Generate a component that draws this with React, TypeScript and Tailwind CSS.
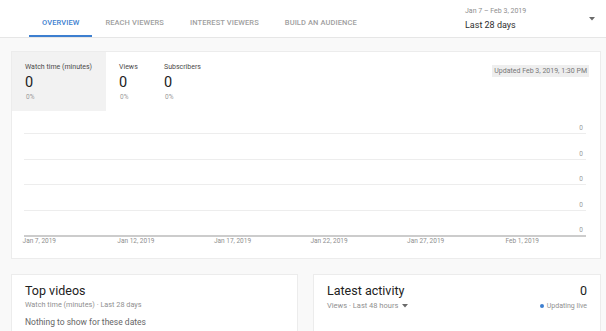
import React from "react";

const tabs = ["OVERVIEW", "REACH VIEWERS", "INTEREST VIEWERS", "BUILD AN AUDIENCE"];
const stats = [
  { label: "Watch time (minutes)", active: true },
  { label: "Views", active: false },
  { label: "Subscribers", active: false },
];
const xLabels = ["Jan 7, 2019", "Jan 12, 2019", "Jan 17, 2019", "Jan 22, 2019", "Jan 27, 2019", "Feb 1, 2019"];

export default function App() {
  return (
    <div className="w-[606px] h-[331px] overflow-hidden bg-[#f9f9f9] font-['Roboto',sans-serif] text-[#282828]">
      {/* Header */}
      <div className="h-[38px] bg-white border-b border-[#e6e6e6] flex items-stretch">
        <div className="flex pl-[29px]">
          {tabs.map((t, i) => (
            <div
              key={t}
              className={
                "px-[13px] flex items-end pb-[7px] text-[7.5px] leading-[10px] tracking-[0.1px] font-medium border-b-2 " +
                (i === 0 ? "text-[#3d7fd0] border-[#3d7fd0]" : "text-[#a0a0a0] border-transparent")
              }
            >
              {t}
            </div>
          ))}
        </div>
        <div className="ml-auto flex items-start pt-[6px] pr-[11px]">
          <div className="flex flex-col w-[124px]">
            <span className="text-[7px] text-[#8e8e8e] leading-[10px]">Jan 7 – Feb 3, 2019</span>
            <span className="text-[9px] text-[#303030] leading-[13px] mt-[3px]">Last 28 days</span>
          </div>
          <svg width="6" height="4" viewBox="0 0 6 4" className="mt-[11px]">
            <path d="M0 0 L6 0 L3 3.5 Z" fill="#6a6a6a" />
          </svg>
        </div>
      </div>

      <div className="pl-[11px] pr-[5px] pt-[13px]">
        {/* Main card */}
        <div className="h-[208px] bg-white border border-[#ececec] flex flex-col">
          <div className="flex h-[59px]">
            {stats.map((s) => (
              <div
                key={s.label}
                className={
                  "flex flex-col pt-[10px] pl-[13px] " +
                  (s.active ? "bg-[#f2f2f2] w-[94px]" : "w-[45px]")
                }
              >
                <span className="text-[7px] leading-[10px] text-[#4a4a4a] whitespace-nowrap">{s.label}</span>
                <span className="text-[14.5px] leading-[17px] text-[#222] mt-[2px]">0</span>
                <span className="text-[6.5px] leading-[9px] text-[#9a9a9a] mt-[2px] pl-[1px]">0%</span>
              </div>
            ))}
            <div className="ml-auto pt-[13px] pr-[11px] flex items-start">
              <span className="bg-[#eeeeee] text-[#777] text-[7px] leading-[10px] px-[2px] py-[1px] block whitespace-nowrap">
                Updated Feb 3, 2019, 1:30 PM
              </span>
            </div>
          </div>
          {/* Chart */}
          <div className="pl-[12px] pr-[14px] mt-[-3px]">
            <div className="flex flex-col">
              {[0, 1, 2, 3].map((i) => (
                <div key={i} className="h-[25.8px] border-b border-[#ededed] flex items-end justify-end">
                  <span className="text-[6.5px] leading-[8px] text-[#9a9a9a] pr-[3px] mb-[1px]">0</span>
                </div>
              ))}
              <div className="h-[25.8px] border-b-2 border-[#cccccc] flex items-end justify-end">
                <span className="text-[6.5px] leading-[8px] text-[#9a9a9a] pr-[3px] mb-[1px]">0</span>
              </div>
            </div>
            <div className="flex ml-[-33px]">
              {xLabels.map((l) => (
                <div key={l} className="w-[96.6px] shrink-0 text-center text-[6.5px] leading-[9px] text-[#8e8e8e]">
                  {l}
                </div>
              ))}
            </div>
          </div>
        </div>

        {/* Bottom cards */}
        <div className="flex gap-[15px] mt-[15px]">
          <div className="w-[287px] h-[80px] bg-white border border-[#ececec] pl-[13px] pt-[8px]">
            <div className="text-[12.5px] leading-[16px] text-[#222]">Top videos</div>
            <div className="text-[7.3px] leading-[10px] text-[#909090] mt-[1px]">Watch time (minutes) · Last 28 days</div>
            <div className="text-[8.5px] leading-[12px] text-[#666] mt-[6px]">Nothing to show for these dates</div>
          </div>
          <div className="w-[288px] h-[80px] bg-white border border-[#ececec] pl-[13px] pr-[13px] pt-[8px]">
            <div className="flex justify-between items-end">
              <span className="text-[12.5px] leading-[16px] text-[#222]">Latest activity</span>
              <span className="text-[12.5px] leading-[16px] text-[#222]">0</span>
            </div>
            <div className="flex justify-between items-center mt-[2px]">
              <span className="text-[7.5px] leading-[10px] text-[#909090] flex items-center">
                Views · Last 48 hours
                <svg width="6" height="4" viewBox="0 0 6 4" className="ml-[4px]">
                  <path d="M0 0 L6 0 L3 3.5 Z" fill="#6a6a6a" />
                </svg>
              </span>
              <span className="text-[7px] leading-[10px] text-[#909090] flex items-center">
                <span className="w-[4px] h-[4px] rounded-full bg-[#3d7fd0] mr-[3px] inline-block" />
                Updating live
              </span>
            </div>
          </div>
        </div>
      </div>
    </div>
  );
}
